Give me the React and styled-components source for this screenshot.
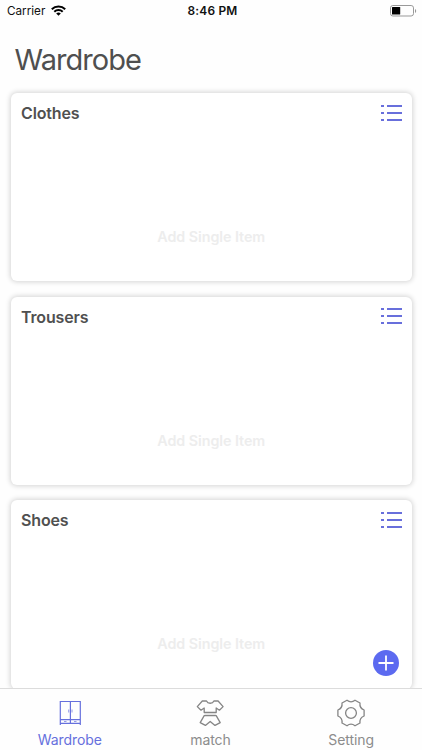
import React from "react";
import styled, { createGlobalStyle } from "styled-components";

const GlobalStyles = createGlobalStyle`
  * {
    box-sizing: border-box;
  }

  body {
    margin: 0;
    background: #fefefe;
    font-family: Inter, "Liberation Sans", sans-serif;
  }
`;

const Screen = styled.div`
  width: 422px;
  height: 750px;
  display: flex;
  flex-direction: column;
  overflow: hidden;
  background: #fefefe;
`;

const StatusBar = styled.header`
  flex: none;
  height: 22px;
  padding: 0 5px 1px 7px;
  display: grid;
  grid-template-columns: 1fr auto 1fr;
  align-items: center;
  color: #111;
`;

const Carrier = styled.div`
  display: flex;
  align-items: center;
  gap: 6px;
  font-size: 11.7px;
`;

const Clock = styled.div`
  padding-left: 1px;
  font-size: 11.9px;
  font-weight: 600;
  letter-spacing: 0.2px;
`;

const BatterySlot = styled.div`
  display: flex;
  justify-content: flex-end;
`;

const Title = styled.h1`
  flex: none;
  height: 71px;
  margin: 0;
  padding: 18px 14.5px 0;
  font-size: 29px;
  line-height: 40px;
  font-weight: 400;
  letter-spacing: -0.95px;
  color: #4f4f4f;
`;

const Content = styled.main`
  flex: 1;
  min-height: 0;
  display: flex;
  flex-direction: column;
  gap: 15.2px;
  padding: 0 10.5px 0 11px;
`;

const Card = styled.section`
  flex: none;
  height: 188.4px;
  display: flex;
  flex-direction: column;
  border-radius: 6px;
  background: #fff;
  box-shadow: 0 0 5px 1px rgba(0, 0, 0, 0.17);
`;

const CardHeader = styled.div`
  display: flex;
  align-items: center;
  justify-content: space-between;
  height: 39px;
  padding: 0 10px;
`;

const CardTitle = styled.h2`
  margin: 0;
  padding-top: 1px;
  font-size: 16px;
  font-weight: 600;
  letter-spacing: -0.15px;
  color: #505050;
`;

const Placeholder = styled.div`
  margin-top: 95px;
  text-align: center;
  font-size: 14.3px;
  line-height: 20px;
  font-weight: 600;
  letter-spacing: -0.05px;
  color: #ededed;
`;

const IconButton = styled.button`
  display: flex;
  padding: 0;
  border: none;
  background: none;
`;

const AddButton = styled.button`
  position: absolute;
  top: 650px;
  left: 373px;
  width: 26px;
  height: 26px;
  padding: 0;
  display: flex;
  align-items: center;
  justify-content: center;
  border: none;
  border-radius: 50%;
  background: #5c6af0;
`;

const TabBar = styled.nav`
  flex: none;
  position: relative;
  height: 62px;
  display: grid;
  grid-template-columns: repeat(3, 1fr);
  border-top: 1px solid #dcdcdc;
  background: #fefefe;
`;

const Tab = styled.div`
  display: flex;
  flex-direction: column;
  align-items: center;
  padding: 9px 1px 0 0;
  font-size: 14px;
  line-height: 20px;
  letter-spacing: -0.05px;
  color: ${(props) => (props.$active ? "#6670dd" : "#8c8c8c")};

  svg {
    margin-bottom: 2px;
  }
`;

const WifiIcon = () => (
  <svg width="15" height="11" viewBox="0 0 15 11" fill="none" stroke="#000" strokeWidth="2">
    <path d="M0.8 4.2a9.5 9.5 0 0 1 13.4 0" />
    <path d="M3.3 6.8a6 6 0 0 1 8.4 0" />
    <path d="M7.5 10.7 5.2 8.5a3.3 3.3 0 0 1 4.6 0z" fill="#000" stroke="none" />
  </svg>
);

const BatteryIcon = () => (
  <svg width="27" height="12" viewBox="0 0 27 12">
    <rect x="0.5" y="0.5" width="23" height="10.5" rx="2.4" fill="none" stroke="#999" />
    <rect x="2" y="2" width="8.2" height="7.4" rx="0.5" fill="#000" />
    <path d="M25 4v4c1.6-.6 1.6-3.4 0-4z" fill="#999" />
  </svg>
);

const ListIcon = () => (
  <svg width="21" height="18" viewBox="0 0 21 18" stroke="#686fdc" strokeWidth="2">
    <path d="M0 2h3M6 2h15M0 9h3M6 9h15M0 16h3M6 16h15" />
  </svg>
);

const PlusIcon = () => (
  <svg width="16" height="16" viewBox="0 0 16 16" stroke="#fff" strokeWidth="1.8">
    <path d="M8 0.5v15M0.5 8h15" />
  </svg>
);

const WardrobeIcon = () => (
  <svg width="28" height="30" viewBox="0 0 28 30" fill="none" stroke="#6670dd" strokeWidth="1.2">
    <path d="M4.3 27V3.5h20V27M4.3 21.6h20M4.3 25.3h20M14.4 3.5v21.8" />
    <path d="M12.7 11.5v3M16 11.5v3M8 23.5h2.5M18 23.5h2.5" strokeWidth="0.7" />
  </svg>
);

const OutfitIcon = () => (
  <svg
    width="28"
    height="30"
    viewBox="0 0 28 30"
    fill="none"
    stroke="#858585"
    strokeWidth="1.3"
    strokeLinejoin="round"
  >
    <path d="M10.5 3H6.3L1.3 8.6 5 12.2 8.2 10v4.5h12V10l3.2 2.2 3.7-3.6L22.1 3h-4.2c-1.3 3-6.1 3-7.4 0z" />
    <path d="M8.5 16h11.4" stroke="#dedede" strokeWidth="1.6" />
    <path d="M8.2 17.6h12l4 7-5.2 2.8-4.8-4-4.8 4-5.2-2.8z" />
  </svg>
);

const GearIcon = () => (
  <svg
    width="28"
    height="30"
    viewBox="0 0 28 30"
    fill="none"
    stroke="#858585"
    strokeWidth="1.3"
    strokeLinejoin="round"
  >
    <path d="M10 2.2 Q14 5.4 18 2.2 L23 5 Q22.3 10 27.1 12 V18 Q22.3 20 23 25 L18 27.8 Q14 24.6 10 27.8 L5 25 Q5.7 20 0.9 18 V12 Q5.7 10 5 5 Z" />
    <circle cx="14" cy="15" r="5.4" />
  </svg>
);

const categories = ["Clothes", "Trousers", "Shoes"];

const App = () => {
  return (
    <>
      <GlobalStyles />
      <Screen>
        <StatusBar>
          <Carrier>
            Carrier
            <WifiIcon />
          </Carrier>
          <Clock>8:46 PM</Clock>
          <BatterySlot>
            <BatteryIcon />
          </BatterySlot>
        </StatusBar>
        <Title>Wardrobe</Title>
        <Content>
          {categories.map((name) => (
            <Card key={name}>
              <CardHeader>
                <CardTitle>{name}</CardTitle>
                <IconButton aria-label={`${name} list`}>
                  <ListIcon />
                </IconButton>
              </CardHeader>
              <Placeholder>Add Single Item</Placeholder>
            </Card>
          ))}
        </Content>
        <AddButton aria-label="Add">
          <PlusIcon />
        </AddButton>
        <TabBar>
          <Tab $active>
            <WardrobeIcon />
            Wardrobe
          </Tab>
          <Tab>
            <OutfitIcon />
            match
          </Tab>
          <Tab>
            <GearIcon />
            Setting
          </Tab>
        </TabBar>
      </Screen>
    </>
  );
};

export default App;
